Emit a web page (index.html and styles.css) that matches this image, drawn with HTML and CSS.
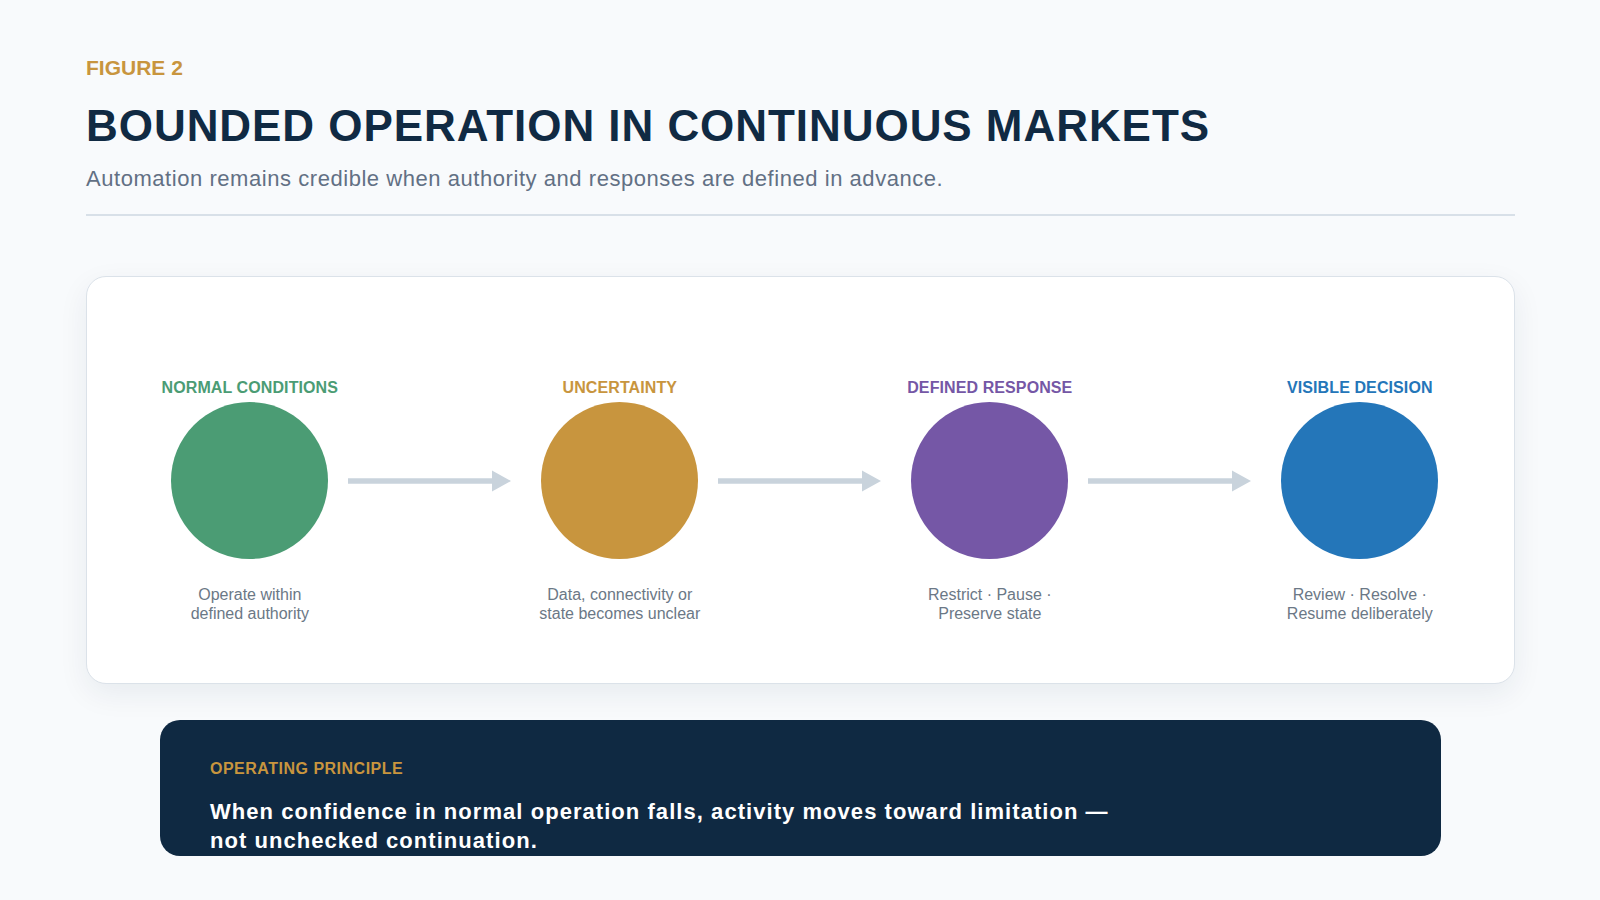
FILE: index.html
```html
<!DOCTYPE html>
<html lang="en">
<head>
<meta charset="utf-8">
<title>Figure 2 — Bounded Operation in Continuous Markets</title>
<link rel="stylesheet" href="styles.css">
</head>
<body>
<main class="page">
  <header class="head">
    <div class="eyebrow">FIGURE 2</div>
    <h1 class="title">BOUNDED OPERATION IN CONTINUOUS MARKETS</h1>
    <p class="subtitle">Automation remains credible when authority and responses are defined in advance.</p>
  </header>
  <hr class="rule">

  <section class="card">
    <div class="flow">
      <div class="node node-green">
        <div class="node-label">NORMAL CONDITIONS</div>
        <div class="dot"></div>
        <div class="node-desc">Operate within<br>defined authority</div>
      </div>
      <svg class="arrow" viewBox="0 0 163 22" width="163" height="22" aria-hidden="true">
        <line x1="0" y1="11" x2="146" y2="11"></line>
        <polygon points="144,0.5 163,11 144,21.5"></polygon>
      </svg>
      <div class="node node-gold">
        <div class="node-label">UNCERTAINTY</div>
        <div class="dot"></div>
        <div class="node-desc">Data, connectivity or<br>state becomes unclear</div>
      </div>
      <svg class="arrow" viewBox="0 0 163 22" width="163" height="22" aria-hidden="true">
        <line x1="0" y1="11" x2="146" y2="11"></line>
        <polygon points="144,0.5 163,11 144,21.5"></polygon>
      </svg>
      <div class="node node-purple">
        <div class="node-label">DEFINED RESPONSE</div>
        <div class="dot"></div>
        <div class="node-desc">Restrict · Pause ·<br>Preserve state</div>
      </div>
      <svg class="arrow" viewBox="0 0 163 22" width="163" height="22" aria-hidden="true">
        <line x1="0" y1="11" x2="146" y2="11"></line>
        <polygon points="144,0.5 163,11 144,21.5"></polygon>
      </svg>
      <div class="node node-blue">
        <div class="node-label">VISIBLE DECISION</div>
        <div class="dot"></div>
        <div class="node-desc">Review · Resolve ·<br>Resume deliberately</div>
      </div>
    </div>
  </section>

  <section class="principle">
    <div class="principle-label">OPERATING PRINCIPLE</div>
    <p class="principle-text">When confidence in normal operation falls, activity moves toward limitation — not unchecked continuation.</p>
  </section>
</main>
</body>
</html>
```

FILE: styles.css
```css
* { box-sizing: border-box; }

html, body {
  margin: 0;
  padding: 0;
  background: #f8fafc;
}

body {
  font-family: "Liberation Sans", Arial, sans-serif;
  color: #102a43;
}

.page {
  padding: 56px 85px 0 86px;
}

.eyebrow {
  font-size: 21px;
  line-height: 24px;
  font-weight: 700;
  color: #c8953e;
}

.title {
  margin: 21px 0 0;
  font-size: 44px;
  line-height: 50px;
  font-weight: 700;
  letter-spacing: 0.95px;
  color: #102a43;
}

.subtitle {
  margin: 14.5px 0 0;
  font-size: 22px;
  line-height: 26px;
  letter-spacing: 0.55px;
  color: #627084;
}

.rule {
  margin: 22px 0 0;
  border: 0;
  height: 2px;
  background: #d8e0e8;
}

.card {
  margin-top: 60px;
  height: 408px;
  background: #ffffff;
  border: 1.5px solid #dbe2e9;
  border-radius: 20px;
  box-shadow: 0 10px 30px rgba(16, 42, 67, 0.07);
  padding: 102.5px 0 0 72.8px;
}

.flow {
  display: flex;
  align-items: flex-start;
}

.node {
  width: 180px;
  flex: 0 0 180px;
  display: flex;
  flex-direction: column;
  align-items: center;
  text-align: center;
}

.node-label {
  font-size: 16px;
  line-height: 18px;
  font-weight: 700;
  letter-spacing: 0.1px;
  white-space: nowrap;
}

.dot {
  width: 157px;
  height: 157px;
  border-radius: 50%;
  margin-top: 5px;
}

.node-desc {
  margin-top: 26px;
  font-size: 16px;
  line-height: 19px;
  color: #6b7886;
}

.node-green .node-label { color: #4b9c74; }
.node-green .dot { background: #4b9c74; }
.node-gold .node-label { color: #c8953e; }
.node-gold .dot { background: #c8953e; }
.node-purple .node-label { color: #7557a6; }
.node-purple .dot { background: #7557a6; }
.node-blue .node-label { color: #2476b9; }
.node-blue .dot { background: #2476b9; }

.arrow {
  flex: 0 0 163px;
  margin: 90.5px 19px 0 8px;
  display: block;
}

.arrow line {
  stroke: #c9d3dc;
  stroke-width: 5.5;
}

.arrow polygon {
  fill: #c9d3dc;
}

.principle {
  margin: 36px 74px 0;
  background: #0f2942;
  border-radius: 20px;
  padding: 40px 50px 1px;
}

.principle-label {
  font-size: 16px;
  line-height: 18px;
  font-weight: 700;
  letter-spacing: 0.5px;
  color: #c8953e;
}

.principle-text {
  margin: 20.5px 0 0;
  max-width: 930px;
  font-size: 22px;
  line-height: 28.5px;
  font-weight: 700;
  letter-spacing: 1.05px;
  color: #ffffff;
}
```
